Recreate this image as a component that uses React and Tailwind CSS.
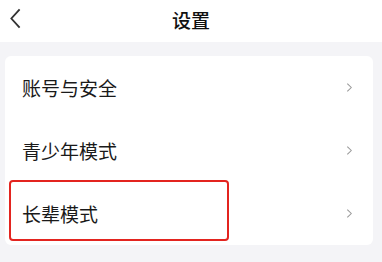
import React from 'react';

const rows = ['账号与安全', '青少年模式', '长辈模式'];

function Chevron({ className }) {
  return (
    <svg viewBox="0 0 8 12" className={className} fill="none" stroke="currentColor" strokeWidth="1.2">
      <path d="M1.5 1.5 L6 6 L1.5 10.5" />
    </svg>
  );
}

export default function App() {
  return (
    <div className="w-[382px] h-[262px] bg-[#f4f4f7] overflow-hidden" style={{ fontFamily: '"Noto Sans CJK SC", "Noto Sans", sans-serif' }}>
      <header className="h-[42px] bg-white flex items-center relative">
        <svg viewBox="0 0 12 22" className="absolute left-[10px] top-[8px] w-[11px] h-[21px] text-[#333]" fill="none" stroke="currentColor" strokeWidth="2">
          <path d="M10.5 1 L1.5 11 L10.5 21" />
        </svg>
        <h1 className="flex-1 text-center text-[19px] font-medium text-[#111] leading-none -mt-[3px]">设置</h1>
      </header>
      <div className="mt-[14px] mx-[5px] mr-[9px] bg-white rounded-[6px]">
        {rows.map((t, i) => (
          <div key={t} className="h-[63px] flex items-center pl-[17px] pr-[20px] relative">
            {i === 2 && (
              <div className="absolute left-[4px] top-[-2px] w-[220px] h-[61px] border-[2.5px] border-[#e3241f] rounded-[4px]" />
            )}
            <span className="flex-1 text-[19px] text-[#1a1a1a] leading-none">{t}</span>
            <Chevron className="w-[7px] h-[11px] text-[#9a9a9a]" />
          </div>
        ))}
      </div>
    </div>
  );
}
